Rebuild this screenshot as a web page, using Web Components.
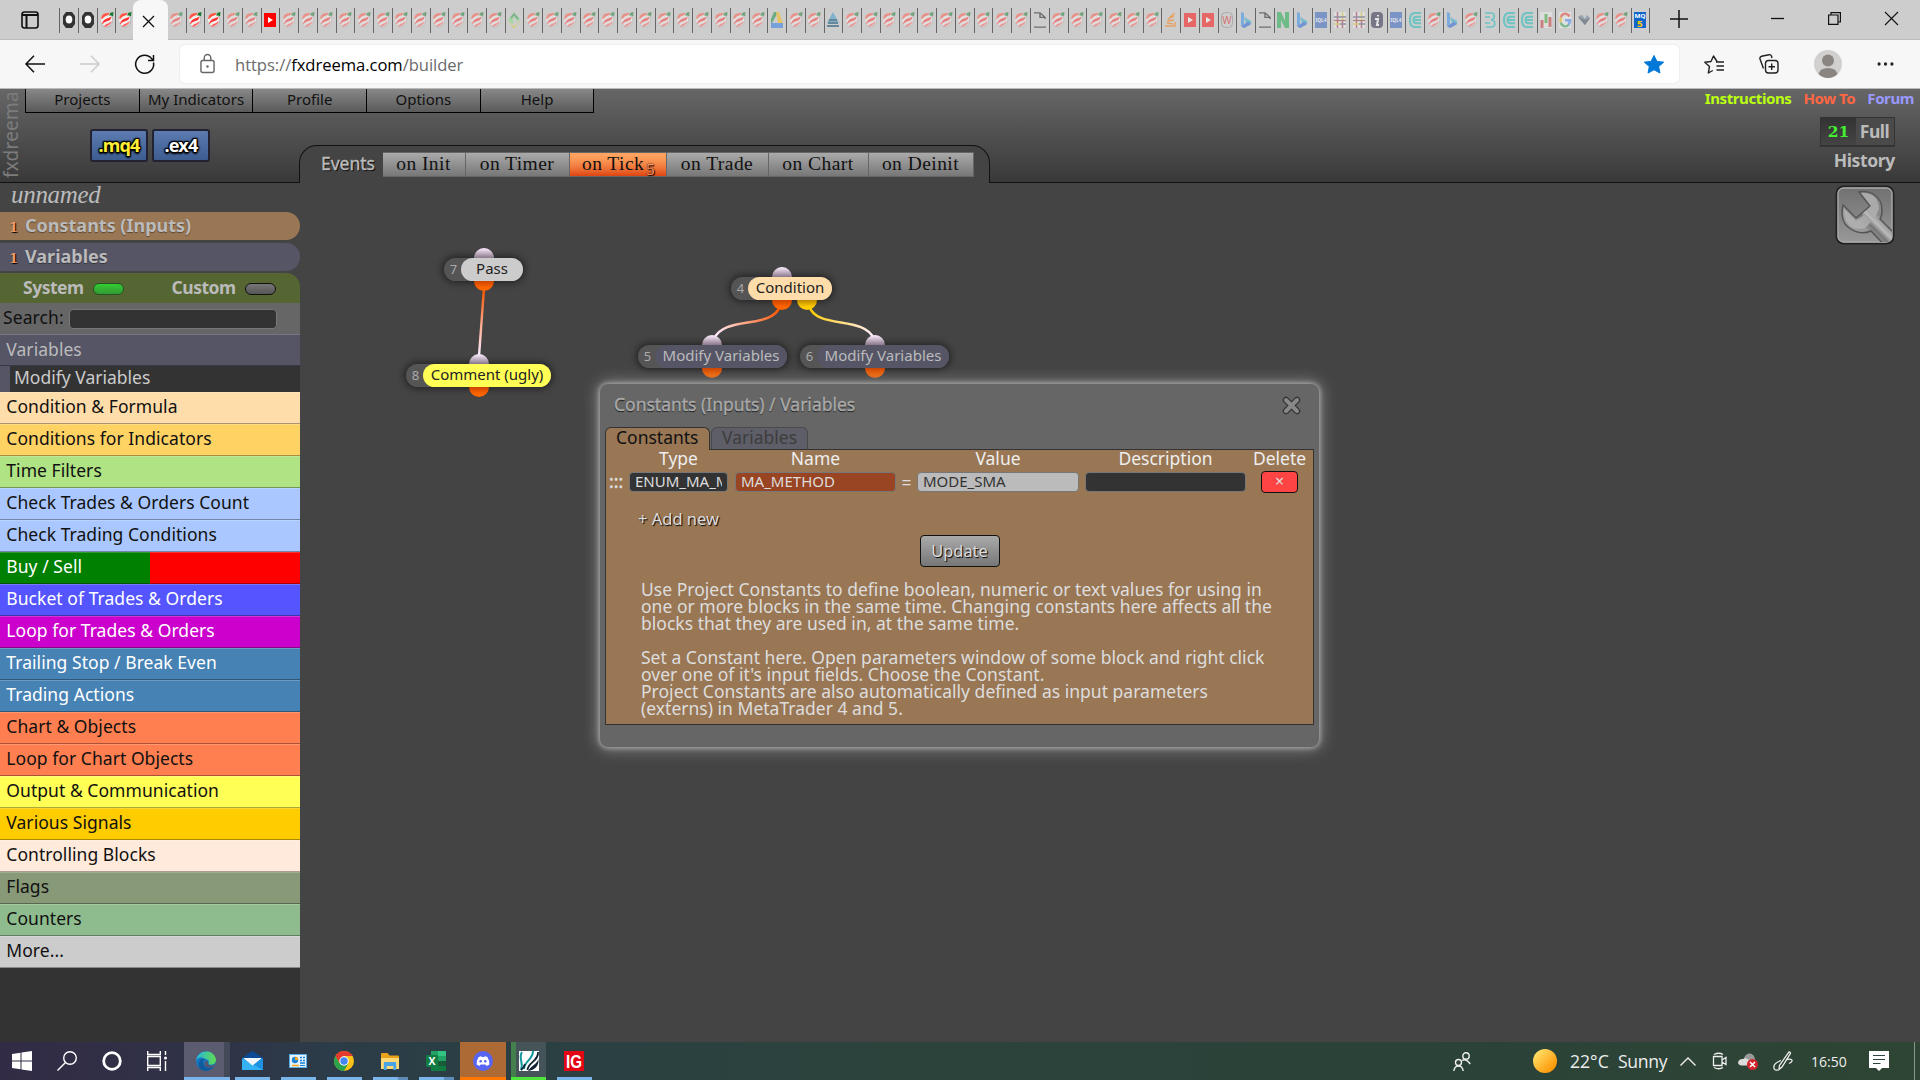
<!DOCTYPE html>
<html lang="en">
<head>
<meta charset="utf-8">
<title>fxDreema builder</title>
<style>
body {
	margin: 0;
	width: 1920px;
	height: 1080px;
	overflow: hidden;
	display: flex;
	flex-direction: column;
	background: #444;
	font-family: "Noto Sans", "Open Sans", sans-serif;
	font-size: 17.5px;
}
main {
	flex: 1;
	min-height: 0;
	display: flex;
}
</style>
</head>
<body>
<browser-tabs></browser-tabs>
<browser-toolbar></browser-toolbar>
<app-header></app-header>
<main>
	<block-sidebar></block-sidebar>
	<block-canvas>
		<block-node style="left:144px;top:75px" number="7" color="#ccc" width="79" tab="17" in="40" out="40">Pass</block-node>
		<block-node style="left:106px;top:181px" number="8" color="#ff5" width="145" tab="17" in="73" out="73">Comment (ugly)</block-node>
		<block-node style="left:431px;top:94px" number="4" color="#fda" width="101" tab="17" in="51" out="51" alt="76">Condition</block-node>
		<block-node style="left:338px;top:162px" number="5" color="#556" ink="#bbb" width="149" tab="17" in="74" out="74">Modify Variables</block-node>
		<block-node style="left:500px;top:162px" number="6" color="#556" ink="#bbb" width="149" tab="17" in="75" out="75">Modify Variables</block-node>
		<tool-button slot="tool"></tool-button>
		<constants-dialog slot="dialog"></constants-dialog>
	</block-canvas>
</main>
<task-bar></task-bar>

<script>
// name: [viewBox, markup]
const ICONS = {
	fx: ["0 0 12 16", `<ellipse cx="6" cy="8.500" rx="6.200" ry="7.300" fill="#bbb"/><ellipse cx="5.600" cy="7.800" rx="5.700" ry="6.800" fill="#f2efec"/><path d="M.3 7Q0 3 3.500 1.500L8.500.8 7.500 3Q4 3.500 1 7z" fill="#f54"/><path d="M1 11.500Q2.500 7.500 6 6.500T10.500 4.500Q10 8.500 6.500 9T1 12.500z" fill="#f33"/><path d="M3 14.300Q4.500 12 7.500 11.300L11 9Q9.500 13.500 3.800 15z" fill="#f66"/><path d="M8 3.500L9.500.8 12.500 0l-.5 4.500L10.300 3.500z" fill="#177a2c"/>`],
	ring: ["0 0 12 16", `<path d="M3 0h6l3 4v8l-3 4H3l-3-4V4z" fill="#333"/><ellipse cx="6" cy="7.500" rx="3.300" ry="4" fill="#fff"/>`],
	yt: ["0 0 12 16", `<path d="M0 1h12v14H0z" fill="#f00"/><path d="M4 5l5 3-5 3z" fill="#fff"/>`],
	diamond: ["0 0 12 16", `<path d="M6 0l6 7-2 3-4-5-2 3 2 2-2 2-4-4z" fill="#7d7"/><path d="M0 9l6 5 6-5-6 8z" fill="#dc4"/><path d="M3 6l3-4 4 5" fill="none" stroke="#385" stroke-width="1.500"/>`],
	drive: ["0 0 12 16", `<path d="M3 0h4L0 13V7z" fill="#0a8a3a"/><path d="M5 0h3l4 11H7z" fill="#fb0"/><path d="M0 11h12v5H0z" fill="#27e"/>`],
	azure: ["0 0 12 16", `<path d="M6 0l6 11H0z" fill="#39c"/><path d="M2 8h8M1 11h10M0 14h12" stroke="#046" stroke-width="2"/>`],
	doc: ["0 0 12 18", `<path d="M0 1h6l5 5v2M6 1v5h5M0 17h12" fill="none" stroke="#111" stroke-width="1.400"/>`],
	stack: ["0 0 12 16", `<path d="M0 14h10v-4M2 11l6 1M2 9l7-1M3 7l6-3M5 5l5-4" stroke="#f70" stroke-width="1.500" fill="none"/>`],
	wiki: ["0 0 12 16", `<rect x=".5" y=".5" width="11" height="15" rx="4" fill="none" stroke="#888"/><text x="6" y="12" text-anchor="middle" font-size="10" fill="#d11">W</text>`],
	bing: ["0 0 12 16", `<path d="M1 0l3 1v11l-3 2z" fill="#2a8df0"/><path d="M4 5l7 4c1 3-1 4-3 5l-4 2-3-2 5-3z" fill="#2ac"/><path d="M1 14l7-4 3 2-7 4z" fill="#25d"/>`],
	neo: ["0 0 12 16", `<path d="M0 0h4l4 9V0h4v16H8L4 8v8H0z" fill="#1a4"/>`],
	mql: ["0 0 12 16", `<path d="M0 0h12v16H0z" fill="#2a5dc0"/><text x="6" y="10" text-anchor="middle" font-size="6" font-weight="700" textLength="11" lengthAdjust="spacingAndGlyphs" fill="#fff">IQL4</text>`],
	mql5: ["0 0 12 18", `<path d="M0 0h12v18H0z" fill="#16c"/><text x="6" y="7" text-anchor="middle" font-size="6.500" font-weight="700" textLength="11" lengthAdjust="spacingAndGlyphs" fill="#fff">MQ</text><text x="6" y="16.500" text-anchor="middle" font-size="10" font-weight="700" fill="#fc0">5</text>`],
	hash: ["0 0 12 16", `<path d="M0 0h12v16H0z" fill="#eee"/><path d="M3.500 0v16M8.500 8v8" stroke="#a35" stroke-width="1.500"/><path d="M8.500 0v9M0 12h6" stroke="#dc2" stroke-width="1.500"/><path d="M0 5h12M6 12h6" stroke="#557" stroke-width="1.500"/><path d="M0 8.500h12" stroke="#933" stroke-width="1.200"/>`],
	info: ["0 0 12 16", `<rect width="12" height="16" rx="4" fill="#224"/><path d="M4 7h3l-1 6h2M7 3v1.500" fill="none" stroke="#fff" stroke-width="2"/>`],
	comb: ["0 0 12 16", `<path d="M12 1H6C2 1 1 4 1 8s1 7 5 7h6M12 4.700H7.500C5 4.700 4.500 6 4.500 8s.5 3.300 3 3.300H12M12 8H5" fill="none" stroke="#1bb" stroke-width="2"/>`],
	curl: ["0 0 12 16", `<path d="M1 1h6c5 0 4 6 0 7 5 0 5 7 0 7H2M1 5h5M1 11h5" fill="none" stroke="#1bb" stroke-width="1.600"/>`],
	bars: ["0 0 12 16", `<path d="M0 0h12v16H0z" fill="#eee"/><path d="M2 8v8M10 5v10" stroke="#c33" stroke-width="3"/><path d="M6 2v9" stroke="#3a3" stroke-width="3"/>`],
	google: ["0 0 12 16", `<path d="M0 0h12v16H0z" fill="#f4f4f4"/><g fill="none" stroke-width="2.400"><path d="M10.500 4.500C8 .5 3 1 1.800 5.500" stroke="#e43"/><path d="M1.800 5.500q-.6 2.500 0 5" stroke="#fb0"/><path d="M1.800 10.500C3 15.500 8 15 10 12.500" stroke="#3a5"/><path d="M6 8.200h5q0 2.500-1.500 4.500" stroke="#48f"/></g>`],
	gem: ["0 0 12 16", `<path d="M0 5l3-2h6l3 3-5 7z" fill="#678"/><path d="M0 5l7 3 5-2-5 7z" fill="#345"/><path d="M4 3l3 4 2-4z" fill="#bcd"/>`],
	panes: ["0 0 18 18", `<rect x="1" y="1" width="16" height="16" rx="2.500" fill="none" stroke="#111" stroke-width="1.600"/><path d="M1 4h16M5.500 4v13" stroke="#111" stroke-width="2"/>`],
	x: ["0 0 10 10", `<path d="M0 0l10 10M10 0L0 10" stroke="#111" stroke-width="1.200"/>`],
	plus: ["0 0 18 18", `<path d="M9 0v18M0 9h18" stroke="#111" stroke-width="1.500"/>`],
	min: ["0 0 13 13", `<path d="M0 6.500h13" stroke="#111" stroke-width="1.300"/>`],
	restore: ["0 0 13 13", `<path d="M.6 3h9.400v9.400H.6zM3 3V.6h9.400V10H10" fill="none" stroke="#111" stroke-width="1.200"/>`],
	close: ["0 0 13 13", `<path d="M0 0l13 13M13 0L0 13" stroke="#111" stroke-width="1.100"/>`],
	back: ["0 0 20 18", `<path d="M20 9H1M9 .8L1 9l8 8.200" fill="none" stroke="currentColor" stroke-width="1.500"/>`],
	reload: ["0 0 20 20", `<path d="M18.500 8.500a9 9 0 1 1-3.200-5.300L18 6M18.500 1v5.500H13" fill="none" stroke="#111" stroke-width="1.500"/>`],
	lock: ["0 0 16 20" , `<rect x="1" y="6.500" width="14" height="12" rx="2" fill="none" stroke="#666" stroke-width="1.500"/><path d="M4.500 6V4a3.500 3.500 0 0 1 7 0v2" fill="none" stroke="#666" stroke-width="1.500"/><circle cx="8" cy="12.500" r="1.300" fill="#666"/>`],
	star: ["0 0 20 20", `<path d="M10 .5l2.900 6.200 6.800.8-5 4.700 1.300 6.800L10 15.600 4 19l1.300-6.800-5-4.700 6.800-.8z" fill="#0078d7" stroke="#0078d7" stroke-linejoin="round"/>`],
	favs: ["0 0 20 19", `<path d="M13 6.500L9.500 1 7 6.500.8 7.300 5.500 11.500 4.300 18l4.500-2.500M12 7h8M12.500 11h7.500M12.500 15h7.500" fill="none" stroke="#222" stroke-width="1.400" stroke-linejoin="round"/>`],
	collections: ["0 0 20 20", `<rect x="6.500" y="6.500" width="12.500" height="12.500" rx="3" fill="none" stroke="#222" stroke-width="1.400"/><path d="M12.700 9.500v6.500M9.500 12.700H16M4.500 14.500L1 5Q.5 3 2.500 2.300L10 .7q2-.3 2.500 1.500L13 4" fill="none" stroke="#222" stroke-width="1.400"/>`],
	avatar: ["0 0 28 28", `<circle cx="14" cy="14" r="14" fill="#d2d0ce"/><circle cx="14" cy="10.500" r="6" fill="#8a8580"/><path d="M4.500 24Q6 18 14 18t9.500 6Q19.500 28 14 28t-9.500-4z" fill="#8a8580"/>`],
	dots: ["0 0 18 4", `<g fill="#222"><circle cx="2.200" cy="2" r="1.700"/><circle cx="9" cy="2" r="1.700"/><circle cx="15.800" cy="2" r="1.700"/></g>`],
	wrench: ["0 0 60 60", `<defs><linearGradient id="bg" x2="0" y2="1"><stop stop-color="#707070"/><stop offset="1" stop-color="#999"/></linearGradient><linearGradient id="metal" gradientUnits="userSpaceOnUse" x1="28" y1="42" x2="42" y2="28"><stop stop-color="#999"/><stop offset=".35" stop-color="#777"/><stop offset=".6" stop-color="#bbb"/><stop offset="1" stop-color="#888"/></linearGradient><clipPath id="c"><rect x="3" y="3" width="54" height="54" rx="5"/></clipPath></defs>
		<rect x="1.500" y="1.500" width="57" height="57" rx="7" fill="url(#bg)" stroke="#222" stroke-width="2"/><rect x="3" y="3" width="54" height="54" rx="5.500" fill="none" stroke="#aaa" stroke-width="1.300"/>
		<g clip-path="url(#c)"><path d="M24 7C35 5 47 11 47 25q0 6-2 9L68 57 57 68 36 46Q24 51 13 42C7 37 6 29 8 20l13 13L35 21z" fill="url(#metal)" stroke="#555" stroke-width="1.500"/><path d="M26 8q17-1 18 16l-4 9-7-9 3-3zM9 24l12 12 8-6 7 7-6 6q-20 5-21-19z" fill="#b3b3b3" opacity=".8"/></g>`],
	cross: ["0 0 19 19", `<path d="M4 4l11 11M15 4L4 15" stroke="#333" stroke-width="6.500" stroke-linecap="round"/><path d="M4 4l11 11M15 4L4 15" stroke="#888" stroke-width="4" stroke-linecap="round"/>`],
	win: ["0 0 20 20", `<path d="M0 3l8.500-1.200V9.500H0zM9.500 1.600L20 0v9.500H9.500zM0 10.500h8.500v7.800L0 17zM9.500 10.500H20V20L9.500 18.500z" fill="#fff"/>`],
	search: ["0 0 20 20", `<circle cx="13" cy="7" r="6.300" fill="none" stroke="#fff" stroke-width="1.400"/><path d="M8.500 11.500L.5 19.500" stroke="#fff" stroke-width="1.500"/>`],
	cortana: ["0 0 20 20", `<circle cx="10" cy="10" r="8.300" fill="none" stroke="#fff" stroke-width="2.800"/>`],
	taskview: ["0 0 20 20", `<path d="M.7 0v3.500h12.600V0M.7 5.500h12.600v9H.7zM.7 20v-3.500h12.600V20M18.500 0v4M18.500 10v10" fill="none" stroke="#fff" stroke-width="1.400"/><circle cx="18.500" cy="7" r="1.500" fill="#fff"/>`],
	edge: ["0 0 20 20", `<defs><linearGradient id="e1" x2="1"><stop stop-color="#2ab4dd"/><stop offset="1" stop-color="#5fdc50"/></linearGradient></defs><circle cx="10" cy="10" r="10" fill="#1479c4"/><path d="M0 10C1-2 18-3 20 8.500c0 5-4.500 6-7.500 4.500 1.500-2.500-.5-5-3.500-5C5 5 1 7 0 10z" fill="url(#e1)"/><path d="M7 11c0 5 5 7.500 11 4q-3 5-9 5C3 19 1 14 3.500 10Q6 7 9 8 7 9 7 11z" fill="#105a9e"/><path d="M12 12.800C13.500 16 17 14.500 19.500 12.500L18 15.500q-5 2.500-9-.5-1.500-3 .5-5.200 3 .2 2.500 3z" fill="#56566e"/>`],
	mail: ["0 0 21 20", `<path d="M0 7l10.500-7L21 7v3H0z" fill="#0a4a96"/><path d="M0 7.500h21V19H0z" fill="#1e90e0"/><path d="M1.500 7h18l-9 7.500z" fill="#f2f6fa"/><path d="M0 7.500V19h21z" fill="#35b2f3"/><path d="M1.500 7h18l-9 7.500z" fill="#f2f6fa"/>`],
	panel: ["0 0 18 16", `<rect y="1" width="18" height="14" rx="1" fill="#e6f3fb"/><rect x=".5" y="1.500" width="17" height="13" fill="none" stroke="#55aee8"/><circle cx="6" cy="7" r="3.200" fill="#1983d8"/><path d="M6 7V3.800A3.200 3.200 0 0 1 9.200 7z" fill="#f7a51c"/><path d="M11 4.500h2M14 4.500h2M11 7.500h2M14 7.500h2M11 10h5" stroke="#1983d8" stroke-width="1.600"/><path d="M3 12.500h7" stroke="#f7a51c" stroke-width="1.500"/><path d="M11 12.500h5" stroke="#1983d8"/>`],
	chrome: ["0 0 20 20", `<circle cx="10" cy="10" r="10" fill="#fbc116"/><path d="M1.340 5A10 10 0 0 1 18.660 5H10L5.700 12.500z" fill="#e33b2e"/><path d="M1.340 5A10 10 0 0 0 10 20l4.300-7.500h-8.600z" fill="#2ba24c"/><circle cx="10" cy="10" r="4.700" fill="#fff"/><circle cx="10" cy="10" r="3.700" fill="#4285f4"/>`],
	folder: ["0 0 19 17", `<path d="M0 1q0-1 1-1h6l2 2.500h9q1 0 1 1V15H0z" fill="#e9a21b"/><path d="M0 5h19v11H0z" fill="#fcd975"/><path d="M3 17V10q0-1 1-1h11q1 0 1 1v7h-3v-4H6v4z" fill="#4aa3e5"/>`],
	excel: ["0 0 20 20", `<path d="M5 0h15v20H5z" fill="#21a366"/><path d="M12 0h8v5h-8z" fill="#33c481"/><path d="M5 10h15v10H5z" fill="#107c41"/><path d="M12 10h8v5h-8z" fill="#185c37"/><rect y="4" width="12" height="12" rx="1" fill="#107c41"/><text x="6" y="13.800" text-anchor="middle" font-size="10.500" font-weight="700" fill="#fff">X</text>`],
	discord: ["0 0 20 20", `<circle cx="10" cy="10" r="10" fill="#5865f2"/><path d="M5.500 6.200Q7 5.400 8.300 5.200l.5.900h2.400l.5-.9q1.400.2 2.800 1 2.200 3.500 1.800 7.200-1.500 1.100-3 1.400l-.8-1.400H7.500l-.8 1.400q-1.500-.3-3-1.400Q3.400 9.400 5.500 6.200z" fill="#fff"/><circle cx="7.700" cy="10.300" r="1.300" fill="#5865f2"/><circle cx="12.300" cy="10.300" r="1.300" fill="#5865f2"/>`],
	feather: ["0 0 20 20", `<path d="M0 0h20v20H0z" fill="#fff"/><path d="M3 1C-1 7 5 12 2 19M14 0C14 9 5 10 5 18" fill="none" stroke="#13979e" stroke-width="2"/><path d="M19 1C20 10 9 11 8.500 19M2 19q3-2 4-6" fill="none" stroke="#123" stroke-width="1.800"/><path d="M9 20C12 15 18 13 19.500 8 20 15 16 19 9 20z" fill="#123"/>`],
	ig: ["0 0 20 20", `<path d="M0 0h20v20H0z" fill="#e30614"/><text x="10" y="16.500" text-anchor="middle" font-family="Liberation Sans" font-size="17.500" font-weight="700" textLength="16" lengthAdjust="spacingAndGlyphs" fill="#fff">IG</text>`],
	people: ["0 0 18 19", `<g fill="none" stroke="#eee" stroke-width="1.400"><circle cx="13" cy="4" r="3.200"/><circle cx="5.500" cy="10.500" r="3"/><path d="M.8 19q.7-5 4.700-5t4.700 5M9 8.500q4-2.500 8.200 3.500"/></g>`],
	sun: ["0 0 24 24", `<defs><linearGradient id="s" x2="1" y2="1"><stop offset=".1" stop-color="#ffe36b"/><stop offset=".8" stop-color="#ff9a0c"/></linearGradient></defs><circle cx="12" cy="12" r="12" fill="url(#s)"/>`],
	chevron: ["0 0 16 9", `<path d="M.5 8.500L8 1l7.500 7.500" fill="none" stroke="#eee" stroke-width="1.400"/>`],
	meet: ["0 0 15 18", `<path d="M2 2.500Q7 0 11 2.500M2 15.500Q7 18 11 15.500M1.500 4.500h8.500v9H1.500zM10 8l4-2.500v7L10 10" fill="none" stroke="#eee" stroke-width="1.300"/>`],
	cloud: ["0 0 20 17", `<path d="M6 5q2-5 6-4.500t5 5.500l1 6H6z" fill="#999"/><path d="M3 12.500q-4-1-2.500-4.500Q2 5.500 5 6q3-2 6 1l-1 5.500z" fill="#ddd"/><circle cx="14.500" cy="11.500" r="5.500" fill="#d3232d"/><path d="M12 9l5 5M17 9l-5 5" stroke="#fff" stroke-width="1.500"/>`],
	pen: ["0 0 20 20", `<g fill="none" stroke="#eee" stroke-width="1.300"><path d="M16 .8q1.500 0 1.500 1.500L9 16l-3 2.500.5-4z"/><path d="M8 9.500Q1 12 .8 16q.2 4 4.200 2.800M13.500 8.500q6-1 5.500 1.500-.5 1.500-3 2.500"/></g>`],
	note: ["0 0 20 20", `<path d="M0 0h20v17h-7l-3 3-3-3H0z" fill="#fff"/><path d="M4 4.500h12M4 8.500h12M4 12.500h7.500" stroke="#2c443b" stroke-width="1.200"/>`],
};

class SvgIcon extends HTMLElement {
	connectedCallback() {
		const [box, markup] = ICONS[this.getAttribute("name")];
		const root = this.attachShadow({mode:"open"});
		root.innerHTML = `<style>:host { display: block; flex: none; } svg { display: block; width: 100%; height: 100%; overflow: visible; }</style>
			<svg viewBox="${box}" preserveAspectRatio="none">${markup}</svg>`;
	}
}
customElements.define("svg-icon", SvgIcon);

// simple elements only need their markup stamped once
function define(name, html) {
	const template = document.createElement("template");
	template.innerHTML = html;
	customElements.define(name, class extends HTMLElement {
		constructor() {
			super();
			this.attachShadow({mode:"open"}).append(template.content.cloneNode(true));
		}
	});
}

/* browser chrome */

// "!" marks a tab that has been loaded, the others are asleep and faded
const PINNED = "ring! ring! fx! fx!".split(" ");
const TABS = ["fx", "fx!", "fx!", "fx", "fx", "yt!", "fx*12", "diamond", "fx*13", "drive", "fx*2", "azure", "fx*10",
	"doc", "fx*6", "stack", "yt*2", "wiki", "bing", "doc", "neo", "bing", "mql", "hash*2", "info", "mql", "comb",
	"fx", "bing", "fx", "curl", "comb*2", "bars", "google", "gem", "fx*2", "mql5!"]
	.flatMap(t => { let [name, n = 1] = t.split("*"); return Array(+n).fill(name); });

const tab = t => `<span class="${t.endsWith("!") ? "live" : ""}"><svg-icon name="${t.replace("!", "")}"></svg-icon></span>`;

define("browser-tabs", `
<style>
:host {
	display: flex;
	align-items: center;
	height: 40px;
	background: #cdcdcd;
	box-shadow: inset 0 -1px #bbb;
}
.panes { width: 18px; height: 18px; margin: 0 20px 0 21px; }
.group { display: flex; height: 25px; margin-top: 1px; }
.pinned { border-left: 1px solid #666; }
.group span {
	box-sizing: border-box;
	width: 18.77px;
	border-right: 1px solid #666;
	padding: 4px 0 0 2.5px;
}
.pinned span { padding-left: 3px; }
.pinned span:last-child { border: 0; width: 16.500px; }
.group svg-icon { width: 12px; height: 16px; opacity: .5; }
.group .live svg-icon { opacity: 1; }
.active {
	align-self: stretch;
	width: 35px;
	display: flex;
	align-items: center;
	justify-content: center;
	background: #f7f7f7;
	border-radius: 8px 8px 0 0;
}
.active svg-icon { width: 11px; height: 11px; margin: 2px 0 0 -3px; }
.plus { width: 18px; height: 18px; margin: -2px 0 0 20px; }
.window { display: flex; gap: 44px; margin: -3px 22px 0 auto; }
.window svg-icon { width: 13px; height: 13px; }
</style>
<svg-icon class="panes" name="panes"></svg-icon>
<div class="group pinned">${PINNED.map(tab).join("")}</div>
<div class="active"><svg-icon name="x"></svg-icon></div>
<div class="group">${TABS.map(tab).join("")}</div>
<svg-icon class="plus" name="plus"></svg-icon>
<div class="window">
	<svg-icon name="min"></svg-icon>
	<svg-icon name="restore"></svg-icon>
	<svg-icon name="close"></svg-icon>
</div>
`);

define("browser-toolbar", `
<style>
:host {
	box-sizing: border-box;
	display: flex;
	align-items: center;
	height: 49px;
	padding: 0 26px 0 25px;
	background: #f7f7f7;
	border-bottom: 1px solid #bbb;
}
.nav { display: flex; align-items: center; gap: 35px; color: #111; }
.nav svg-icon { width: 20px; height: 18px; }
.nav .off { color: #ccc; transform: scaleX(-1); }
.nav .reload { height: 20px; }
.url {
	flex: 1;
	box-sizing: border-box;
	height: 38px;
	margin-left: 25px;
	padding: 0 15px 0 20px;
	display: flex;
	align-items: center;
	gap: 20px;
	background: #fff;
	border-radius: 5px;
	box-shadow: 0 0 2px #0002;
	color: #6b6b6b;
	font: 16.6px "Open Sans", "Noto Sans", sans-serif;
	letter-spacing: -.05px;
}
.url .lock { width: 15px; height: 20px; }
.url .star { width: 20px; height: 19px; margin-left: auto; }
b { font-weight: 400; color: #000; margin: 0; }
.tools { display: flex; align-items: center; gap: 35px; margin-left: 25px; }
</style>
<div class="nav">
	<svg-icon name="back"></svg-icon>
	<svg-icon class="off" name="back"></svg-icon>
	<svg-icon class="reload" name="reload"></svg-icon>
</div>
<div class="url">
	<svg-icon class="lock" name="lock"></svg-icon>
	<span>https://<b>fxdreema.com</b>/builder</span>
	<svg-icon class="star" name="star"></svg-icon>
</div>
<div class="tools">
	<svg-icon name="favs" style="width:20px;height:19px"></svg-icon>
	<svg-icon name="collections" style="width:20px;height:20px"></svg-icon>
	<svg-icon name="avatar" style="width:28px;height:28px"></svg-icon>
	<svg-icon name="dots" style="width:17px;height:4px"></svg-icon>
</div>
`);

/* application header */

define("app-header", `
<style>
:host {
	box-sizing: border-box;
	display: flex;
	height: 94px;
	background: linear-gradient(#666, #393939);
	border-bottom: 1px solid #111;
}
.brand {
	width: 25px;
	writing-mode: vertical-rl;
	transform: rotate(180deg);
	text-align: right;
	line-height: 22px;
	color: #7c7c7c;
	box-sizing: border-box;
	padding-bottom: 2px;
	font-size: 19px;
	letter-spacing: .2px;
}
.middle { flex: 1; display: flex; flex-direction: column; }
.menu { display: flex; }
.menu span {
	box-sizing: border-box;
	width: 113.700px;
	height: 24px;
	line-height: 20px;
	text-align: center;
	font-size: 15px;
	color: #111;
	background: linear-gradient(#888, #5a5a5a);
	border: solid #000;
	border-width: 0 1px 1px 0;
}
.menu span:first-child { width: 114.700px; border-left-width: 1px; }
.lower { flex: 1; display: flex; }
.files { box-sizing: border-box; width: 274px; display: flex; gap: 4px; padding: 16px 0 0 65px; }
.files span {
	box-sizing: border-box;
	width: 58px;
	height: 33px;
	line-height: 28px;
	text-align: center;
	border: 2px solid #223;
	border-radius: 3px;
	background: linear-gradient(#5c7bb0, #3d5c90);
	font-size: 18px;
	font-weight: 700;
	letter-spacing: -.8px;
	color: #fff;
	text-shadow: 0 0 2px #000, 1px 1px 1px #000, -1px -1px 1px #000, 1px -1px 1px #000, -1px 1px 1px #000, 0 2px 2px #000, 0 0 3px #000;
}
.files .mq { color: #fe3; }
.right {
	display: flex;
	flex-direction: column;
	align-items: flex-end;
	padding-right: 6px;
	font-weight: 700;
	color: #bbb;
}
.links { display: flex; gap: 12px; font-size: 15px; line-height: 19px; letter-spacing: -.4px; }
.quota {
	display: flex;
	box-sizing: border-box;
	width: 75px;
	height: 30px;
	margin: 9px 19px 0 0;
	border: solid #333;
	border-width: 1px 1px 2px;
	background: #4a4a4a;
	line-height: 26px;
	letter-spacing: -.5px;
}
.quota b { width: 35px; text-align: center; background: linear-gradient(#333, #444); color: #4e3; font: 700 15.5px/28px "DejaVu Serif", serif; letter-spacing: 0; }
.quota span { flex: 1; text-align: center; padding-right: 1px; }
.history { margin-right: 19px; line-height: 27px; letter-spacing: -.35px; }
</style>
<div class="brand">fxdreema</div>
<div class="middle">
	<div class="menu"><span>Projects</span><span>My Indicators</span><span>Profile</span><span>Options</span><span>Help</span></div>
	<div class="lower">
		<div class="files"><span class="mq">.mq4</span><span>.ex4</span></div>
		<event-tabs>
			<event-tab style="width:83px">on Init</event-tab>
			<event-tab style="width:104px">on Timer</event-tab>
			<event-tab style="width:97px" active count="5">on Tick</event-tab>
			<event-tab style="width:102px">on Trade</event-tab>
			<event-tab style="width:100px">on Chart</event-tab>
			<event-tab style="width:105px">on Deinit</event-tab>
		</event-tabs>
	</div>
</div>
<div class="right">
	<div class="links"><span style="color:#bf1">Instructions</span><span style="color:#f64">How To</span><span style="color:#99f">Forum</span></div>
	<div class="quota"><b>21</b><span>Full</span></div>
	<div class="history">History</div>
</div>
`);

define("event-tabs", `
<style>
:host {
	box-sizing: border-box;
	display: flex;
	align-self: flex-end;
	width: 691px;
	height: 38px;
	margin-bottom: -1px;
	padding: 6px 0 0 21px;
	border: 1px solid #111;
	border-bottom: 0;
	border-radius: 18px 18px 0 0;
	background: #444;
}
b { width: 62px; line-height: 23px; color: #bbb; font-weight: 400; -webkit-text-stroke: .4px #bbb; text-shadow: 1px 1px 1px #000; }
</style>
<b>Events</b><slot></slot>
`);

class EventTab extends HTMLElement {
	connectedCallback() {
		const root = this.attachShadow({mode:"open"});
		const count = this.getAttribute("count");
		root.innerHTML = `
<style>
:host {
	box-sizing: border-box;
	display: block;
	position: relative;
	height: 25px;
	border: 1px solid #666;
	border-left-width: 0;
	background: linear-gradient(#aaa, #777);
	color: #111;
	text-align: center;
	font: 19.5px/22px "Liberation Serif", serif;
	letter-spacing: .45px;
	text-indent: -1px;
}
:host([active]) { background: linear-gradient(#fa6b, #c310), linear-gradient(#f95, #d41); text-align: left; padding-left: 13px; }
sub { position: absolute; right: 11px; bottom: -4px; font-size: 16px; line-height: 20px; color: #f96; text-shadow: 1px 1px 1px #000, 0 0 2px #000; }
</style>
<slot></slot>${count ? `<sub>${count}</sub>` : ""}`;
	}
}
customElements.define("event-tab", EventTab);

/* sidebar */

const GROUPS = [
	["Condition & Formula", "#fda"],
	["Conditions for Indicators", "#ffd264"],
	["Time Filters", "#afe384"],
	["Check Trades & Orders Count", "#aac8ff"],
	["Check Trading Conditions", "#aac8ff"],
	["Buy / Sell", "linear-gradient(90deg, #008000 50%, #f00 50%)", "#fff"],
	["Bucket of Trades & Orders", "#55f", "#fff"],
	["Loop for Trades & Orders", "#c0c", "#fff"],
	["Trailing Stop / Break Even", "#4682b4", "#fff"],
	["Trading Actions", "#4682b4", "#fff"],
	["Chart & Objects", "#ff7f50"],
	["Loop for Chart Objects", "#ff7f50"],
	["Output & Communication", "#ff5"],
	["Various Signals", "#fc0"],
	["Controlling Blocks", "#ffeadb"],
	["Flags", "#897"],
	["Counters", "#8fbc8f"],
	["More...", "#ccc"],
];

class SidebarRow extends HTMLElement {
	connectedCallback() {
		const root = this.attachShadow({mode:"open"});
		root.innerHTML = `
<style>
:host {
	box-sizing: border-box;
	display: block;
	height: 32px;
	padding-left: 6.3px;
	line-height: 28px;
	letter-spacing: .05px;
	background: ${this.getAttribute("fill")};
	color: ${this.getAttribute("ink") || "#111"};
	box-shadow: inset 0 -1px #0005, inset 0 1px #fff3;
}
</style>
<slot></slot>`;
	}
}
customElements.define("sidebar-row", SidebarRow);

define("block-sidebar", `
<style>
:host { display: block; width: 300px; background: #333; flex: none; }
.project { height: 29px; background: #444; padding-left: 11px; font: italic 25px/24px "Liberation Serif", serif; letter-spacing: -.3px; color: #bbb; }
.head { background: #444; display: flex; flex-direction: column; gap: 3px; }
.pill {
	height: 28px;
	display: flex;
	padding-left: 9px;
	gap: 7px;
	line-height: 27px;
	border-radius: 0 14px 14px 0;
	font-weight: 700;
	font-size: 18px;
	color: #bbb;
	text-shadow: 0 1px 1px #0006;
}
.pill i { font: 700 13px/31px "DejaVu Serif", serif; color: #e96; width: 9px; text-shadow: 1px 1px 1px #000; }
.source {
	height: 30px;
	margin-top: -1px;
	display: flex;
	align-items: center;
	padding-left: 23px;
	background: #563;
	border-radius: 0 14px 0 0;
	color: #bbb;
	font-weight: 700;
	letter-spacing: -.5px;
}
.source span { margin-top: -2px; }
.source u { flex: none; box-sizing: border-box; width: 31px; height: 12px; margin: 2px 48px 0 9px; border: 1px solid #111; border-radius: 6px; background: linear-gradient(#777, #555); }
.source u.on { border-color: #252; background: linear-gradient(#3c3, #393); }
.search { box-sizing: border-box; height: 31px; display: flex; align-items: center; gap: 4px; padding-left: 3px; background: #666; line-height: 28px; color: #111; letter-spacing: .1px; }
.search span { align-self: flex-start; width: 62px; }
.search div { box-sizing: border-box; width: 208px; height: 20px; background: #333; border: 1px solid #777; border-radius: 4px; }
.sub { box-sizing: border-box; height: 26px; border-left: 10px solid #556; padding-left: 4px; line-height: 23px; color: #ccc; background: #333; }
.open { line-height: 31px; }
</style>
<div class="head">
	<div class="project" style="margin-bottom:-3px">unnamed</div>
	<div class="pill" style="background:#975"><i>1</i>Constants (Inputs)</div>
	<div class="pill" style="background:#556"><i>1</i>Variables</div>
	<div class="source"><span>System</span><u class="on"></u><span>Custom</span><u></u></div>
</div>
<div class="search"><span>Search:</span><div></div></div>
<sidebar-row class="open" fill="#556" ink="#bbb">Variables</sidebar-row>
<div class="sub">Modify Variables</div>
${GROUPS.map(([name, fill, ink = "#111"]) => `<sidebar-row fill="${fill}" ink="${ink}">${name.replace("&", "&amp;")}</sidebar-row>`).join("")}
`);

/* canvas */

define("block-canvas", `
<style>
:host { display: block; flex: 1; position: relative; background: #444; }
svg { position: absolute; inset: 0; width: 100%; height: 100%; }
path { fill: none; stroke-width: 2.400; }
</style>
<svg>
	<defs>
		<linearGradient id="a" gradientUnits="userSpaceOnUse" x1="0" y1="107" x2="0" y2="171"><stop stop-color="#f50"/><stop offset="1" stop-color="#fef"/></linearGradient>
		<linearGradient id="b" gradientUnits="userSpaceOnUse" x1="479" y1="126" x2="415" y2="153"><stop stop-color="#f50"/><stop offset="1" stop-color="#fef"/></linearGradient>
		<linearGradient id="c" gradientUnits="userSpaceOnUse" x1="510" y1="126" x2="573" y2="153"><stop stop-color="#fc0"/><stop offset="1" stop-color="#fef"/></linearGradient>
	</defs>
	<path d="M184 105L179 173" stroke="url(#a)"/>
	<path d="M480 123C472 147 424 132 414 156" stroke="url(#b)"/>
	<path d="M509 123C517 147 564 132 574 156" stroke="url(#c)"/>
</svg>
<slot></slot>
<slot name="tool"></slot>
<slot name="dialog"></slot>
`);

class BlockNode extends HTMLElement {
	connectedCallback() {
		const attr = (name, fallback) => this.getAttribute(name) || fallback;
		const root = this.attachShadow({mode:"open"});
		root.innerHTML = `
<style>
:host { display: block; position: absolute; width: ${attr("width")}px; height: 23px; }
.body { position: relative; display: flex; height: 100%; background: #555; border-radius: 11.5px; box-shadow: 0 0 7px 2px #0007; }
.body i { width: ${attr("tab")}px; box-sizing: border-box; padding-left: 2px; text-align: center; font: 13px/22px "Noto Sans", sans-serif; color: #aaa; }
.body span { flex: 1; text-align: center; border-radius: 11.5px; background: ${attr("color")}; color: ${attr("ink", "#222")}; font-size: 15px; line-height: 20.5px; white-space: nowrap; }
.port { position: absolute; width: 20px; height: 10px; margin-left: -10px; }
.in { top: -10px; border-radius: 10px 10px 0 0; background: linear-gradient(#fef, #878); }
.out { bottom: -10px; border-radius: 0 0 10px 10px; background: linear-gradient(#c40, #f60 70%); }
.alt { background: linear-gradient(#b80, #fc0 70%); }
</style>
<div class="body"><i>${attr("number")}</i><span><slot></slot></span></div>
<div class="port in" style="left:${attr("in")}px"></div>
<div class="port out" style="left:${attr("out")}px"></div>
${attr("alt") ? `<div class="port out alt" style="left:${attr("alt")}px"></div>` : ""}`;
	}
}
customElements.define("block-node", BlockNode);

define("tool-button", `
<style>
:host { display: block; position: absolute; right: 25px; top: 2px; }
svg-icon { width: 60px; height: 60px; }
</style>
<svg-icon name="wrench"></svg-icon>
`);

define("constants-dialog", `
<style>
:host {
	box-sizing: border-box;
	position: absolute;
	left: 300px;
	top: 201px;
	width: 719px;
	height: 363px;
	padding: 0 5px;
	border-radius: 8px;
	background: #666;
	box-shadow: 0 0 5px 1px #aaa, 0 0 16px 2px #888;
	display: flex;
	flex-direction: column;
}
header { display: flex; justify-content: space-between; height: 43px; padding: 0 13px 0 9px; line-height: 40px; color: #aaa; -webkit-text-stroke: .4px #aaa; text-shadow: 0 1px 1px #111; }
header svg-icon { width: 19px; height: 19px; margin-top: 12px; -webkit-text-stroke: 0; }
.tabs { display: flex; height: 23px; margin-bottom: -1px; gap: 1px; }
.tabs span { box-sizing: border-box; height: 22px; border: 1px solid #4a4a4a; border-bottom: 0; border-radius: 6px 6px 0 0; background: #5e5e68; color: #3d3d3d; line-height: 19px; padding-left: 10px; width: 97px; }
.tabs .on { position: relative; height: 23px; width: 105px; border-color: #333; background: #975; color: #111; }
.panel { box-sizing: border-box; height: 276px; background: #975; border: 1px solid #333; color: #ddd; }
.row { display: grid; grid-template-columns: 23px 99px 7px 161px 21px 162px 6px 161px 15px 37px; align-items: center; }
.head { height: 19px; line-height: 18px; color: #eee; margin-top: -2px; margin-bottom: 1px; }
.head span { justify-self: center; white-space: nowrap; }
.values { height: 28px; margin-top: 0; }
.field { box-sizing: border-box; height: 20px; line-height: 16.500px; padding: 0 5px; border: 1px solid #777; border-radius: 4px; font-size: 15px; white-space: nowrap; color: #ddd; background: #333; }
.field span { display: block; overflow: hidden; }
.grip { padding-left: 3px; line-height: 20px; margin-top: -3px; -webkit-text-stroke: .5px #ddd; letter-spacing: .1px; }
.del { box-sizing: border-box; height: 22px; border: 1px solid #111; border-radius: 4px; background: #f44; display: flex; align-items: center; justify-content: center; font-size: 16px; line-height: 16px; padding-bottom: 2px; }
.add { margin: 13px 0 0 32px; font-size: 16.500px; line-height: 20px; text-shadow: 1px 1px 1px #000; }
.update { box-sizing: border-box; width: 80px; height: 32px; margin: 6px auto 0; border: 1px solid #111; border-radius: 4px; background: linear-gradient(#aaa, #777); text-align: center; line-height: 30px; font-size: 16.400px; color: #ddd; text-shadow: 1px 1px 1px #000; }
p { margin: 14px 0 0 35px; line-height: 17px; white-space: nowrap; letter-spacing: .015px; }
p + p { margin-top: 17px; }
</style>
<header><span>Constants (Inputs) / Variables</span><svg-icon name="cross"></svg-icon></header>
<div class="tabs"><span class="on">Constants</span><span>Variables</span></div>
<div class="panel">
	<div class="row head"><i></i><span>Type</span><i></i><span>Name</span><i></i><span>Value</span><i></i><span>Description</span><i></i><span>Delete</span></div>
	<div class="row values">
		<div class="grip">:::</div>
		<div class="field"><span>ENUM_MA_M</span></div><i></i>
		<div class="field" style="background:#942">MA_METHOD</div>
		<span style="text-align:center">=</span>
		<div class="field" style="background:#bbb;color:#333">MODE_SMA</div><i></i>
		<div class="field"></div><i></i>
		<div class="del">×</div>
	</div>
	<div class="add">+ Add new</div>
	<div class="update">Update</div>
	<p>Use Project Constants to define boolean, numeric or text values for using in<br>one or more blocks in the same time. Changing constants here affects all the<br>blocks that they are used in, at the same time.</p>
	<p>Set a Constant here. Open parameters window of some block and right click<br>over one of it's input fields. Choose the Constant.<br>Project Constants are also automatically defined as input parameters<br>(externs) in MetaTrader 4 and 5.</p>
</div>
`);

/* taskbar */

class TaskButton extends HTMLElement {
	connectedCallback() {
		const [w, h] = (this.getAttribute("size") || "20 20").split(" ");
		const root = this.attachShadow({mode:"open"});
		root.innerHTML = `
<style>
:host { box-sizing: border-box; display: flex; align-items: center; justify-content: center; height: 38px; width: 46px; flex: none; }
:host([open]) { background: linear-gradient(#7ab6ea, #7ab6ea) 50% 100% / 35px 3px no-repeat; }
:host([windows]) { background: linear-gradient(90deg, #7ab6ea 25px, #5d8cb8 25px) 50% 100% / 35px 3px no-repeat; }
:host([current]) { background: linear-gradient(#7ab6ea, #7ab6ea) 0 100% / 100% 3px no-repeat, linear-gradient(90deg, #5c5c70 40px, #444959 40px); }
:host([alert]) { background: linear-gradient(#f70, #f70) 0 100% / 100% 3px no-repeat, #ad6a35; }
:host([busy]) { background: linear-gradient(#4ee63a, #4ee63a) 0 100% / 100% 3px no-repeat, linear-gradient(90deg, #43804d 5px, #445459 5px); }
svg-icon { width: ${w}px; height: ${h}px; }
</style>
<svg-icon name="${this.getAttribute("name")}"></svg-icon>`;
	}
}
customElements.define("task-button", TaskButton);

define("task-bar", `
<style>
:host {
	display: flex;
	justify-content: space-between;
	height: 38px;
	background: linear-gradient(90deg, #322b45, #2f3247 200px, #2c3c48 330px, #2b4042 560px, #2c433c 900px, #2b4238 1500px, #2e4534);
	color: #eee;
	font: 17.600px "Open Sans", "Noto Sans", sans-serif;
}
.left, .tray { display: flex; align-items: center; }
.tray svg-icon { margin-right: var(--after); }
</style>
<div class="left">
	<task-button name="win" style="width:44px"></task-button>
	<task-button name="search"></task-button>
	<task-button name="cortana" style="width:44px"></task-button>
	<task-button name="taskview"></task-button>
	<task-button name="edge" current style="margin-left:4px;padding-right:2px"></task-button>
	<task-button name="mail" size="21 20" open style="margin-left:-1px"></task-button>
	<task-button name="panel" size="18 16" open></task-button>
	<task-button name="chrome" open></task-button>
	<task-button name="folder" size="18 17" windows></task-button>
	<task-button name="excel" windows></task-button>
	<task-button name="discord" alert style="margin-left:1px"></task-button>
	<task-button name="feather" busy style="width:35px;margin:0 5px"></task-button>
	<task-button name="ig" open></task-button>
</div>
<div class="tray">
	<svg-icon name="people" style="width:18px;height:19px;--after:62px"></svg-icon>
	<svg-icon name="sun" style="width:24px;height:24px;--after:13px"></svg-icon>
	<span style="width:48px">22°C</span>
	<span style="width:62px;letter-spacing:-.3px">Sunny</span>
	<svg-icon name="chevron" style="width:16px;height:9px;--after:16px"></svg-icon>
	<svg-icon name="meet" style="width:15px;height:18px;--after:11px"></svg-icon>
	<svg-icon name="cloud" style="width:20px;height:17px;--after:15px"></svg-icon>
	<svg-icon name="pen" style="width:20px;height:20px;--after:18px"></svg-icon>
	<span style="width:58px;font-size:14px">16:50</span>
	<svg-icon name="note" style="width:20px;height:20px;--after:25px"></svg-icon>
	<div style="width:5px;height:38px;border-left:1px solid #8a958e"></div>
</div>
`);
</script>
</body>
</html>
